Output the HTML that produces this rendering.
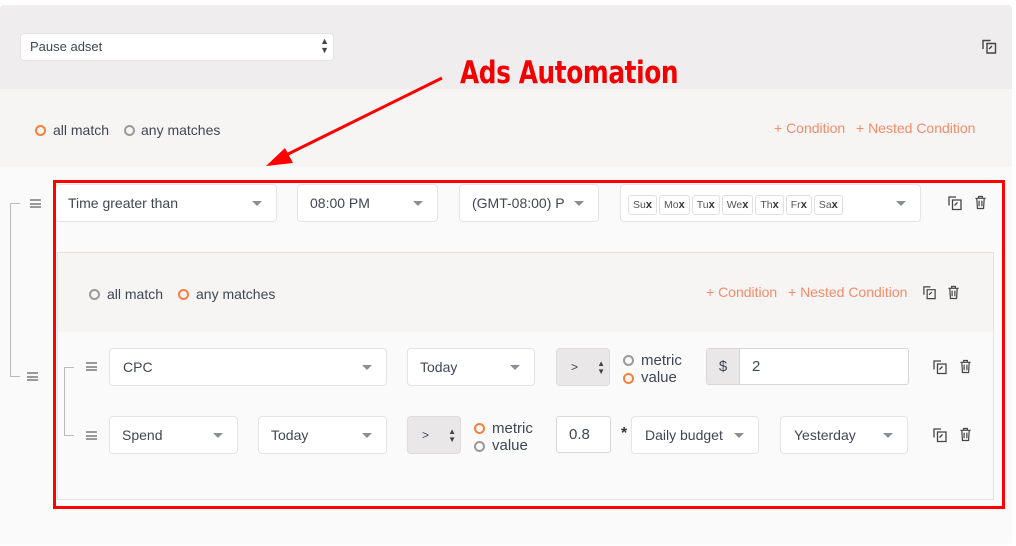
<!DOCTYPE html>
<html><head><meta charset="utf-8"><style>
*{box-sizing:border-box;margin:0;padding:0}
body{width:1016px;height:546px;background:#fff;position:relative;overflow:hidden;font-family:"Liberation Sans",sans-serif;color:#3f4754;font-size:14px}
.a{position:absolute}
.sel{position:absolute;background:#fff;border:1px solid #e6e3e4;border-radius:4px;height:38px;line-height:36px;padding-left:12px;font-size:14px}
.sel .car{position:absolute;right:14px;top:16px;width:0;height:0;border-left:5px solid transparent;border-right:5px solid transparent;border-top:5px solid #8a8f96}
.gr{position:absolute;background:#e9e7e8;border:1px solid #dcdadb;border-radius:4px;height:38px;line-height:36px;padding-left:14px;font-size:12px}
.rad{position:absolute;width:11px;height:11px;border-radius:50%;border:2.5px solid #9a9a9a}
.rad.o{border-color:#f5803e}
.lnk{position:absolute;color:#f48c69;font-size:14px}
.hd{position:absolute;width:11px;height:9px;border-top:2px solid #999;border-bottom:2px solid #999}
.hd:after{content:"";position:absolute;left:0;right:0;top:1.5px;border-top:2px solid #999}
.day{display:inline-block;border:1px solid #e2dfe0;border-radius:3px;height:20px;line-height:18px;font-size:10.5px;padding:0 4px;margin-right:2px;color:#555}
.day b{font-size:11px;color:#333}
</style></head><body>
<div class="a" style="left:0;top:5px;width:1012px;height:540px;background:#fafafa;border-radius:4px"></div>
<div class="a" style="left:0;top:5px;width:1012px;height:84px;background:#efedee;border-radius:4px 4px 0 0"></div>
<div class="a" style="left:0;top:89px;width:1012px;height:78px;background:#f7f4f4"></div>
<div class="sel" style="left:20px;top:33px;width:314px;height:28px;line-height:26px;font-size:13px;padding-left:9px">Pause adset<span class="a" style="right:4px;top:3px;font-size:9px;line-height:9px;color:#444">▲<br>▼</span></div>
<svg class="a" style="left:981px;top:38px" width="17" height="17" viewBox="0 0 17 17" fill="none" stroke="#444" stroke-width="1.4"><path d="M2 11V2.5h7.5M6 5.5h8.5v9.5H6z"/><path d="M8 11l3-3"/></svg>
<div class="a" style="left:460px;top:55px;font-family:'DejaVu Sans',sans-serif;font-weight:bold;font-size:31px;color:#f20000;letter-spacing:-0.5px;transform:scaleX(0.8);transform-origin:0 0;white-space:nowrap">Ads Automation</div>
<svg class="a" style="left:0;top:0" width="1016" height="546"><line x1="442" y1="78" x2="280" y2="158" stroke="#f00" stroke-width="3"/><polygon points="266,166 285,148 293,163" fill="#f00"/></svg>
<div class="rad o" style="left:35px;top:125px"></div><div class="a" style="left:53px;top:122px;font-size:14px">all match</div>
<div class="rad" style="left:124px;top:125px"></div><div class="a" style="left:141px;top:122px">any matches</div>
<div class="lnk" style="left:774px;top:120px">+ Condition</div><div class="lnk" style="left:856px;top:120px">+ Nested Condition</div>
<div class="a" style="left:10px;top:203px;width:10px;height:174px;border:1px solid #bbb;border-right:none"></div>
<div class="hd" style="left:30px;top:199px"></div><div class="hd" style="left:27px;top:372px"></div>
<div class="sel" style="left:55px;top:184px;width:222px">Time greater than<i class="car"></i></div>
<div class="sel" style="left:297px;top:184px;width:141px">08:00 PM<i class="car"></i></div>
<div class="sel" style="left:459px;top:184px;width:140px">(GMT-08:00) P<i class="car"></i></div>
<div class="sel" style="left:620px;top:184px;width:301px;padding-left:7px"><span class="day">Su<b>x</b></span><span class="day">Mo<b>x</b></span><span class="day">Tu<b>x</b></span><span class="day">We<b>x</b></span><span class="day">Th<b>x</b></span><span class="day">Fr<b>x</b></span><span class="day">Sa<b>x</b></span><i class="car"></i></div>
<div class="a" style="left:57px;top:252px;width:937px;height:248px;background:#fafafa;border:1px solid #e5e1e1"></div>
<div class="a" style="left:58px;top:253px;width:935px;height:79px;background:#f7f4f4"></div>
<div class="rad" style="left:89px;top:289px"></div><div class="a" style="left:107px;top:286px">all match</div>
<div class="rad o" style="left:178px;top:289px"></div><div class="a" style="left:196px;top:286px">any matches</div>
<div class="lnk" style="left:706px;top:284px">+ Condition</div><div class="lnk" style="left:788px;top:284px">+ Nested Condition</div>
<div class="a" style="left:64px;top:367px;width:10px;height:69px;border:1px solid #bbb;border-right:none"></div>
<div class="hd" style="left:86px;top:362px"></div><div class="hd" style="left:86px;top:431px"></div>
<div class="sel" style="left:109px;top:348px;width:278px;padding-left:13px">CPC<i class="car"></i></div>
<div class="sel" style="left:407px;top:348px;width:128px">Today<i class="car"></i></div>
<div class="gr" style="left:556px;top:348px;width:54px">&gt;<span class="a" style="right:4px;top:11px;font-size:8px;line-height:8px;color:#444">▲<br>▼</span></div>
<div class="rad" style="left:623px;top:355px"></div><div class="a" style="left:641px;top:352px;font-size:15px">metric</div>
<div class="rad o" style="left:623px;top:373px"></div><div class="a" style="left:641px;top:369px;font-size:15px">value</div>
<div class="a" style="left:706px;top:348px;width:203px;height:37px;background:#fff;border:1px solid #d8d6d7;border-radius:3px"></div>
<div class="a" style="left:707px;top:349px;width:33px;height:35px;background:#e9e7e8;border-right:1px solid #d8d6d7;text-align:center;line-height:35px;font-size:15px">$</div>
<div class="a" style="left:752px;top:358px;font-size:15px">2</div>
<div class="sel" style="left:109px;top:416px;width:129px">Spend<i class="car"></i></div>
<div class="sel" style="left:258px;top:416px;width:129px">Today<i class="car"></i></div>
<div class="gr" style="left:407px;top:416px;width:54px">&gt;<span class="a" style="right:4px;top:11px;font-size:8px;line-height:8px;color:#444">▲<br>▼</span></div>
<div class="rad o" style="left:474px;top:423px"></div><div class="a" style="left:492px;top:420px;font-size:15px">metric</div>
<div class="rad" style="left:474px;top:441px"></div><div class="a" style="left:492px;top:437px;font-size:15px">value</div>
<div class="a" style="left:556px;top:416px;width:55px;height:37px;background:#fff;border:1px solid #d8d6d7;border-radius:3px;padding-left:12px;line-height:35px;font-size:15px">0.8</div>
<div class="a" style="left:621px;top:425px;font-size:16px;font-weight:bold;color:#333">*</div>
<div class="sel" style="left:631px;top:416px;width:128px;padding-left:13px">Daily budget<i class="car"></i></div>
<div class="sel" style="left:780px;top:416px;width:128px;padding-left:13px">Yesterday<i class="car"></i></div>
<svg width="0" height="0" style="position:absolute"><defs>
<symbol id="cp" viewBox="0 0 16 16"><g fill="none" stroke="#444" stroke-width="1.3"><path d="M2 10.5V2h7M5.5 5h8.5v9.5H5.5z"/><path d="M7.5 10.5l3-3"/></g></symbol>
<symbol id="tr" viewBox="0 0 14 16"><g fill="none" stroke="#444" stroke-width="1.3"><path d="M1.5 3.5h11M5 3.5V1.5h4v2M3 3.5l.7 11h6.6l.7-11M5.5 6v6M8.5 6v6"/></g></symbol></defs></svg>
<svg class="a" style="left:947px;top:195px" width="16" height="16"><use href="#cp"/></svg><svg class="a" style="left:974px;top:195px" width="13" height="15"><use href="#tr"/></svg>
<svg class="a" style="left:922px;top:285px" width="15" height="15"><use href="#cp"/></svg><svg class="a" style="left:947px;top:285px" width="13" height="15"><use href="#tr"/></svg>
<svg class="a" style="left:932px;top:359px" width="16" height="16"><use href="#cp"/></svg><svg class="a" style="left:959px;top:359px" width="13" height="15"><use href="#tr"/></svg>
<svg class="a" style="left:932px;top:427px" width="16" height="16"><use href="#cp"/></svg><svg class="a" style="left:959px;top:427px" width="13" height="15"><use href="#tr"/></svg>
<div class="a" style="left:53px;top:180px;width:952px;height:329px;border:3px solid #f00"></div>
</body></html>
